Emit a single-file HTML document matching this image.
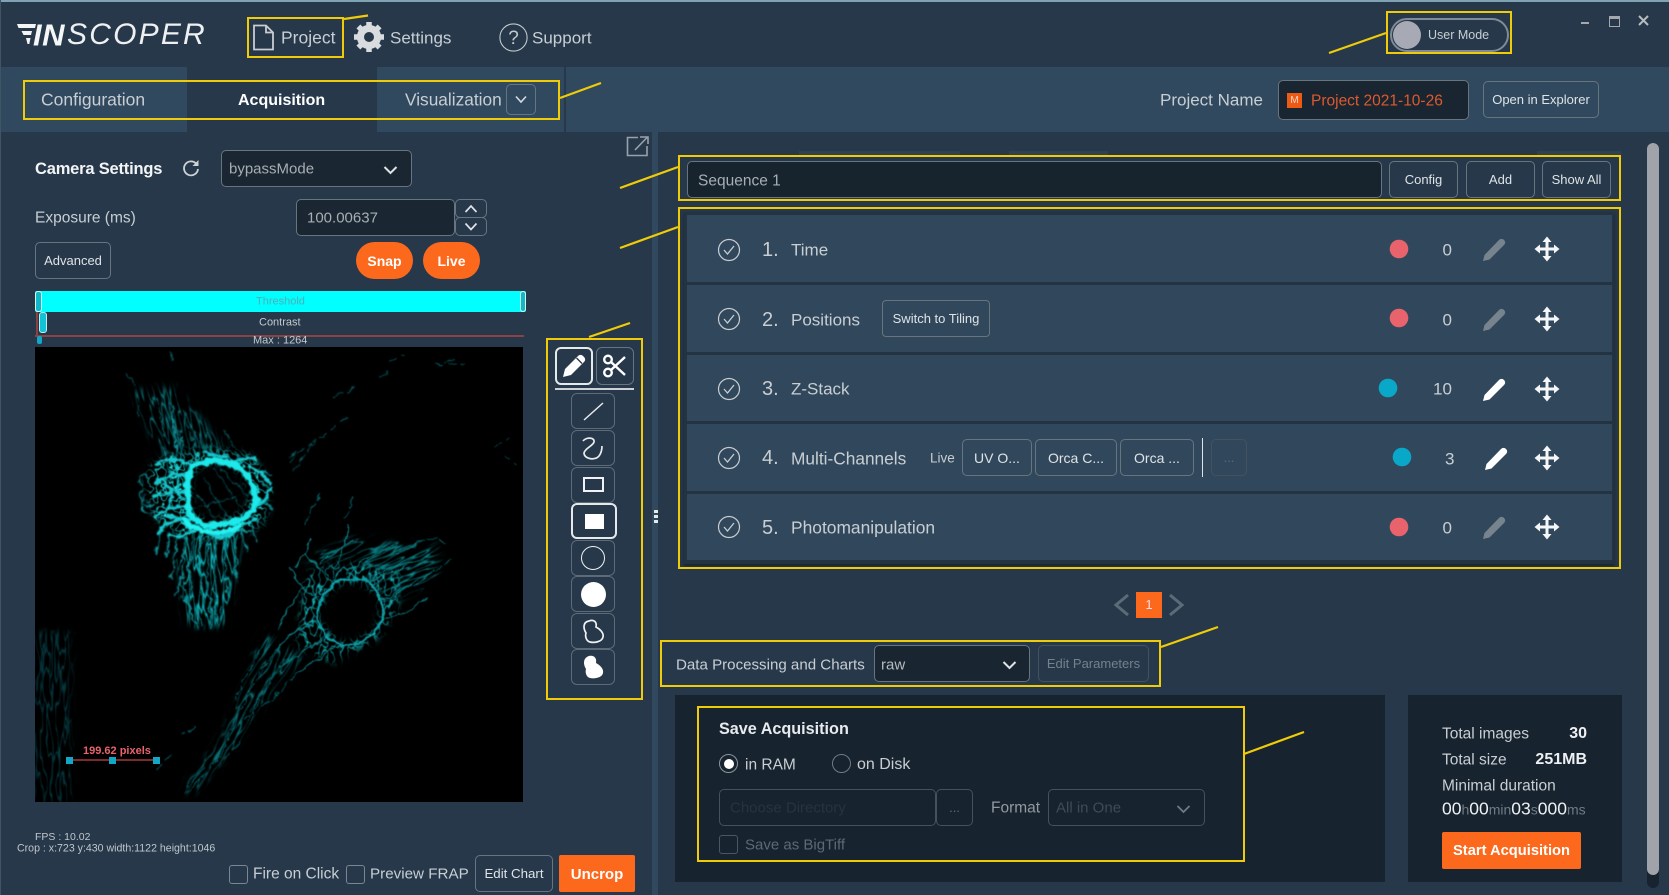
<!DOCTYPE html>
<html><head><meta charset="utf-8">
<style>
html,body{margin:0;padding:0;background:#26384a;}
#p{position:relative;width:1669px;height:895px;overflow:hidden;background:#26384a;font-family:"Liberation Sans",sans-serif;color:#c8ced3;}
#p>*{position:absolute;}
.t{white-space:nowrap;transform:translateY(-50%);line-height:1;}
.b{box-sizing:border-box;border:1.5px solid #67757f;border-radius:5px;display:flex;align-items:center;justify-content:center;color:#dfe3e6;font-size:13px;white-space:nowrap;}
.d{background:#192530;}
.o{background:#fd691c;color:#fff;font-weight:bold;border:none;}
.dis{border-color:#44525e;color:#5d6973;}
.row{left:687px;width:925px;background:#31485c;}
.y{box-sizing:border-box;border:2.5px solid #f0cc08;}
.tool{left:571px;width:44px;height:36px;box-sizing:border-box;border:1.5px solid #5d6b78;border-radius:6px;}
svg{overflow:visible;}
</style></head><body><div id="p">
<!-- bars -->
<div style="left:0;top:0;width:1669px;height:67px;background:#26384a"></div>
<div style="left:0;top:0;width:1669px;height:1.5px;background:#7fa3b3"></div>
<div style="left:0;top:67px;width:1669px;height:65px;background:#30495e"></div>
<div style="left:187px;top:67px;width:190px;height:65px;background:#26384a"></div>
<div style="left:564px;top:67px;width:1.5px;height:65px;background:#26384a"></div>
<div style="left:652px;top:132px;width:6px;height:763px;background:#30495e"></div>
<div style="left:0;top:0;width:1px;height:895px;background:#3f5566"></div>
<div style="left:799px;top:151px;width:161px;height:4px;background:#2e4253"></div>
<div style="left:1009px;top:151px;width:99px;height:4px;background:#2e4253"></div>
<div style="left:1537px;top:151px;width:84px;height:4px;background:#2e4253"></div>

<!-- logo -->
<svg style="left:17px;top:22px" width="20" height="24" viewBox="0 0 20 24"><path d="M0 2H19L18 6H1.5ZM4.5 9H15L14 13H6.5ZM9 16H13.5L12.3 22H10.5Z" fill="#f2f4f6"/></svg>
<div class="t" style="left:33px;top:35px;font-size:31px;font-weight:bold;font-style:italic;color:#f5f6f7;letter-spacing:.5px">IN</div>
<div class="t" style="left:67px;top:35px;font-size:30px;font-style:italic;color:#eef0f2;letter-spacing:2.2px">SCOPER</div>

<!-- top nav -->
<svg style="left:253px;top:24px" width="21" height="27" viewBox="0 0 21 27"><path d="M1 1.5H13L20 8.5V25.5H1ZM13 1.5V8.5H20" fill="none" stroke="#c9cdd1" stroke-width="1.8"/></svg>
<div class="t" style="left:281px;top:38px;font-size:17.5px">Project</div>
<svg style="left:354px;top:22px" width="30" height="30" viewBox="-15 -15 30 30"><circle r="8.6" fill="none" stroke="#d9dcdf" stroke-width="7"/><g stroke="#d9dcdf" stroke-width="5.5"><path d="M0-15V15M-15 0H15M-10.6-10.6L10.6 10.6M-10.6 10.6L10.6-10.6"/></g><circle r="5" fill="#26384a"/></svg>
<div class="t" style="left:390px;top:38px;font-size:17px">Settings</div>
<svg style="left:499px;top:23px" width="29" height="29" viewBox="0 0 29 29"><circle cx="14.5" cy="14.5" r="13.6" fill="none" stroke="#c4c9cd" stroke-width="1.1"/><text x="14.5" y="21" text-anchor="middle" font-size="19" fill="#c4c9cd" font-family="Liberation Sans">?</text></svg>
<div class="t" style="left:532px;top:38px;font-size:17px">Support</div>

<!-- tabs -->
<div class="t" style="left:41px;top:100px;font-size:17.5px">Configuration</div>
<div class="t" style="left:238px;top:101px;font-size:16px;font-weight:bold;color:#fff">Acquisition</div>
<div class="t" style="left:405px;top:100px;font-size:17.3px">Visualization</div>
<div class="b" style="left:506px;top:84px;width:30px;height:31px"><svg width="14" height="9" viewBox="0 0 14 9"><path d="M2 1.5L7 7L12 1.5" fill="none" stroke="#d5d9dc" stroke-width="1.6"/></svg></div>

<!-- user mode -->
<div style="left:1390px;top:18px;width:119px;height:34px;box-sizing:border-box;border:2px solid #7f8b95;border-radius:17px"></div>
<div style="left:1392.500px;top:21px;width:28px;height:28px;border-radius:50%;background:#a7aab4"></div>
<div class="t" style="left:1428px;top:35px;font-size:12.5px;color:#c9ced2">User Mode</div>
<div style="left:1581px;top:22px;width:8px;height:2px;background:#a3a9ae"></div>
<div style="left:1609px;top:16px;width:9px;height:7px;border:1.5px solid #a3a9ae;border-top-width:3px"></div>
<svg style="left:1638px;top:15px" width="11" height="11"><path d="M1 1L10 10M10 1L1 10" stroke="#b7bcc0" stroke-width="2"/></svg>

<!-- project name -->
<div class="t" style="left:1160px;top:100px;font-size:17px">Project Name</div>
<div class="b d" style="left:1278px;top:80px;width:191px;height:40px"></div>
<div style="left:1287px;top:93px;width:15px;height:15px;background:#ee5a14;color:#f8d8c8;font-size:10px;line-height:15px;text-align:center">M</div>
<div class="t" style="left:1311px;top:101px;font-size:15.500px;color:#dd5a2e">Project 2021-10-26</div>
<div class="b" style="left:1483px;top:81px;width:116px;height:37px;font-size:13px">Open in Explorer</div>

<!-- camera settings -->
<svg style="left:626px;top:136px" width="23" height="21" viewBox="0 0 23 21"><path d="M12 1.500H1.500V19.500H21V10M9 14L21.500 1M14 1H22V8" fill="none" stroke="#98a2ab" stroke-width="1.600"/></svg>
<div class="t" style="left:35px;top:169px;font-size:16.500px;font-weight:bold;color:#f2f4f5;letter-spacing:-.2px">Camera Settings</div>
<svg style="left:182px;top:159px" width="18" height="18" viewBox="0 0 18 18"><path d="M14.500 5A7 7 0 1 0 16 10" fill="none" stroke="#cdd2d6" stroke-width="1.800"/><path d="M16.500 1V7H10.500Z" fill="#cdd2d6"/></svg>
<div class="b d" style="left:221px;top:150px;width:191px;height:37px;background:#1a2732"></div>
<div class="t" style="left:229px;top:169px;font-size:15px;color:#a7aeb4">bypassMode</div>
<svg style="left:383px;top:165px" width="15" height="10"><path d="M1.500 2L7.500 8L13.500 2" fill="none" stroke="#dfe3e6" stroke-width="2"/></svg>
<div class="t" style="left:35px;top:218px;font-size:15.500px">Exposure (ms)</div>
<div class="b d" style="left:296px;top:199px;width:159px;height:37px;background:#1a2732"></div>
<div class="t" style="left:307px;top:218px;font-size:15px;color:#a7aeb4">100.00637</div>
<div class="b" style="left:455px;top:199px;width:32px;height:19px"><svg width="14" height="9"><path d="M1.500 8L7 2L12.500 8" fill="none" stroke="#dfe3e6" stroke-width="1.700"/></svg></div>
<div class="b" style="left:455px;top:217px;width:32px;height:19px"><svg width="14" height="9"><path d="M1.500 1.500L7 7.500L12.500 1.500" fill="none" stroke="#dfe3e6" stroke-width="1.700"/></svg></div>
<div class="b" style="left:35px;top:242px;width:76px;height:37px">Advanced</div>
<div class="b o" style="left:356px;top:242px;width:57px;height:37px;border-radius:19px;font-size:14px">Snap</div>
<div class="b o" style="left:423px;top:242px;width:57px;height:37px;border-radius:19px;font-size:14px">Live</div>

<!-- sliders -->
<div style="left:35px;top:291px;width:491px;height:21px;background:#00ffff;border-radius:2px"></div>
<div style="left:35px;top:291px;width:7px;height:21px;background:#13b7cc;border:1px solid #cfe;box-sizing:border-box;border-radius:3px"></div>
<div style="left:520px;top:291px;width:6px;height:21px;background:#13b7cc;border:1px solid #cfe;box-sizing:border-box;border-radius:3px"></div>
<div class="t" style="left:256px;top:302px;font-size:11px;color:#50aeb6">Threshold</div>
<div class="t" style="left:259px;top:323px;font-size:11px;color:#c4cacf">Contrast</div>
<div style="left:35px;top:335px;width:489px;height:1.500px;background:#8a4342"></div>
<div style="left:36px;top:312px;width:1.500px;height:23px;background:#8a4342"></div>
<div style="left:38.500px;top:312px;width:8px;height:21px;background:#12c3d8;border:1px solid #bdeff3;box-sizing:border-box;border-radius:3px"></div>
<div style="left:37px;top:336px;width:5px;height:8px;background:#12a7c7;border-radius:2px"></div>
<div class="t" style="left:253px;top:341px;font-size:11px;color:#c4cacf">Max : 1264</div>

<!-- microscopy image -->
<svg style="left:35px;top:347px;background:#000;overflow:hidden" width="488" height="455" viewBox="0 0 488 455">
<defs>
<filter id="mesh" filterUnits="userSpaceOnUse" x="0" y="0" width="488" height="455" color-interpolation-filters="sRGB">
<feGaussianBlur in="SourceGraphic" stdDeviation="4" result="s"/>
<feTurbulence type="fractalNoise" baseFrequency=".13" numOctaves="2" seed="3" result="n"/>
<feColorMatrix in="n" type="matrix" values="0 0 0 0 0  0 0 0 0 0  0 0 0 0 0  1 0 0 0 0"/>
<feComponentTransfer><feFuncA type="table" tableValues="0 0 0 0 0 0 0 0 0 .12 1 .12 0 0 0 0 0 0 0 0 0"/></feComponentTransfer>
<feGaussianBlur stdDeviation=".45" result="r"/>
<feComposite in="s" in2="r" operator="in"/>
</filter>
<filter id="mesh2" filterUnits="userSpaceOnUse" x="0" y="0" width="488" height="455" color-interpolation-filters="sRGB">
<feGaussianBlur in="SourceGraphic" stdDeviation="3.500" result="s"/>
<feTurbulence type="fractalNoise" baseFrequency=".14 .09" numOctaves="2" seed="11" result="n"/>
<feColorMatrix in="n" type="matrix" values="0 0 0 0 0  0 0 0 0 0  0 0 0 0 0  0 1 0 0 0"/>
<feComponentTransfer><feFuncA type="table" tableValues="0 0 0 0 0 0 0 0 0 .1 1 .1 0 0 0 0 0 0 0 0 0"/></feComponentTransfer>
<feGaussianBlur stdDeviation=".4" result="r"/>
<feComposite in="s" in2="r" operator="in"/>
</filter>
<filter id="st" filterUnits="userSpaceOnUse" x="-300" y="-300" width="1100" height="1100" color-interpolation-filters="sRGB">
<feGaussianBlur in="SourceGraphic" stdDeviation="4" result="s"/>
<feTurbulence type="fractalNoise" baseFrequency=".17 .028" numOctaves="2" seed="21" result="n"/>
<feColorMatrix in="n" type="matrix" values="0 0 0 0 0  0 0 0 0 0  0 0 0 0 0  1 0 0 0 0"/>
<feComponentTransfer><feFuncA type="table" tableValues="0 0 0 0 0 0 0 0 0 .1 1 .1 0 0 0 0 0 0 0 0 0"/></feComponentTransfer>
<feGaussianBlur stdDeviation=".4" result="r"/>
<feComposite in="s" in2="r" operator="in"/>
</filter>
<filter id="w1" x="-10%" y="-10%" width="120%" height="120%"><feTurbulence type="fractalNoise" baseFrequency=".12" numOctaves="3" seed="4"/><feDisplacementMap in="SourceGraphic" scale="8" xChannelSelector="R" yChannelSelector="G"/><feGaussianBlur stdDeviation=".8"/></filter>
<filter id="w2" x="-10%" y="-10%" width="120%" height="120%"><feTurbulence type="fractalNoise" baseFrequency=".1" numOctaves="3" seed="9"/><feDisplacementMap in="SourceGraphic" scale="7" xChannelSelector="G" yChannelSelector="R"/><feGaussianBlur stdDeviation=".55"/></filter>
</defs>
<!-- dense mesh, masked by cell shapes -->
<g filter="url(#mesh)">
<path fill-rule="evenodd" d="M112 125C122 104 170 98 208 106C232 116 238 150 230 170C220 190 190 194 160 190C128 190 106 160 112 125ZM160 122C170 114 196 114 206 126C216 140 218 152 212 160C204 170 188 174 172 172C160 170 154 160 156 148C155 138 155 130 160 122Z" fill="#22ffff"/>
</g>
<g filter="url(#st)">
<path d="M140 186H206L198 240L190 278H152L146 240Z" fill="#0cc4ca"/>
</g>
<g transform="rotate(-15 150 80)" filter="url(#st)">
<path transform="rotate(15 150 80)" d="M96 44L140 40L192 104L126 108Z" fill="#0a7d84"/>
</g>
<g filter="url(#mesh2)">
<path fill-rule="evenodd" d="M262 300L270 226L310 214L366 226L362 262L344 290L300 316ZM286 266C286 250 300 236 318 236C336 236 346 252 344 270C340 284 328 292 312 294C296 292 287 282 286 266Z" fill="#13c2c8"/>
</g>
<g transform="rotate(65 320 230)" filter="url(#st)">
<path transform="rotate(-65 320 230)" d="M268 214L315 192L403 199L403 231L350 258L330 222Z" fill="#0a8c92"/>
</g>
<g transform="rotate(30 240 320)" filter="url(#st)">
<path transform="rotate(-30 240 320)" d="M228 284L270 312L239 340L200 400L160 445L145 445L190 385L218 312Z" fill="#0a7d83"/>
</g>
<g filter="url(#st)">
<path d="M0 285H36V455H0Z" fill="#063f47"/>
</g>
<g filter="url(#w1)" fill="none" stroke-linecap="round">
<g stroke="#0b5f66" stroke-width="1.100" stroke-dasharray="9 3">
<path d="M136 6L138 16M92 26L100 38M104 48L102 72M122 50L130 88M134 56L146 100M148 62L160 98M158 84L172 108M172 86L188 112M190 84L198 100"/>
<path d="M258 124L280 92M300 50L320 40M345 30L352 26M410 16L420 12M255 110L262 104"/>
</g>
<g stroke="#0d9299" stroke-width="1.300">
<path d="M138 60L142 112M128 100L136 134M146 90L150 118M158 100L164 116M175 98L180 114M200 106L206 118M220 122L236 128M224 134L240 145M222 150L236 160M214 168L230 180"/>
<path d="M108 142C100 150 106 160 120 158M112 130C104 124 100 134 108 140M120 165C108 170 104 160 108 150"/>
<path d="M134 186L132 210M142 190L136 232M150 190L146 236L156 262M158 186L154 228L158 250M166 186L164 220L170 262M174 186L172 232L176 272M182 186L178 240L182 276M190 186L190 230L194 250M198 182L202 208L200 230M206 178L212 206M214 172L222 196M128 180L120 206"/>
<path d="M150 250L162 282M160 258L168 278M178 260L176 280M188 258L184 272M148 232L140 248"/>
</g>
<g stroke="#13c8ce" stroke-width="3">
<path d="M155 118C145 112 130 108 122 118M150 130C140 124 128 128 122 136M152 146C140 142 128 146 118 150M150 160C138 158 126 162 120 172M154 172C142 172 128 176 124 186M166 182C154 186 146 190 134 188"/>
<path d="M172 186C180 194 192 190 204 182M196 178C206 182 216 176 222 170M222 158C230 154 234 148 236 140M216 120C226 122 230 130 234 136M200 116C206 112 212 110 220 112M170 106C176 110 186 108 194 110"/>
<path d="M128 134C136 140 140 150 134 160M140 118C146 126 142 140 146 150M132 168C140 168 150 174 156 182"/>
</g>
<path d="M157 120C170 112 195 110 208 124C218 136 224 150 219 160C212 172 190 180 172 178C160 176 150 166 153 150C152 138 152 128 157 120Z" stroke="#1be9ea" stroke-width="6" stroke-dasharray="18 2 11 3"/>
<path d="M150 172C160 186 186 192 206 178" stroke="#22f2f2" stroke-width="5"/>
<g stroke="#0a646b" stroke-width=".9">
<path d="M168 130L192 168M178 122L206 160M162 146L180 172M186 120L212 150M165 160L200 150"/>
</g>
</g>
<g filter="url(#w2)" fill="none" stroke-linecap="round">
<path d="M283 266C283 248 298 232 318 232C338 232 350 250 348 270C344 286 330 296 312 298C294 296 284 284 283 266Z" stroke="#0f9fa6" stroke-width="2.200"/>
<g stroke="#0a7a80" stroke-width="1.200">
<path d="M283 250C270 244 262 236 256 222M296 236C290 224 276 216 270 206M312 230C320 216 344 204 362 196M332 236C350 226 372 218 396 208M346 254C362 246 380 236 398 224M350 272C362 268 380 262 392 250M284 272C268 280 252 290 240 304M290 288C276 300 262 312 244 318M304 296C292 304 280 316 262 326M270 240C258 252 250 266 242 282"/>
<path d="M298 232C300 214 310 200 314 178M286 216C296 206 310 196 318 194M356 208C366 204 378 200 386 196M260 220C268 210 272 200 276 192"/>
</g>
<g stroke="#075a60" stroke-width="1" stroke-dasharray="10 3">
<path d="M240 304C226 322 216 340 206 362M250 312C232 336 222 356 210 372M226 304C216 318 210 334 200 352M206 362C198 376 194 390 188 404M262 326C250 340 240 352 228 358M236 330C232 340 222 356 214 378M270 178C274 170 278 160 284 148M380 200C390 192 402 188 410 196M400 226L416 212M310 172L318 150"/>
</g>
<g stroke="#064f55" stroke-width="1" stroke-dasharray="8 5">
<path d="M188 404C176 420 164 436 150 446M170 420L152 440M136 408L120 424M160 380L146 386M204 396L190 412M275 100C290 90 300 78 312 70M254 116L276 96M355 14L370 8M400 18L430 16M470 108L482 118M460 100L474 92"/>
</g>
</g>
<path d="M35 413H122" stroke="#a8383c" stroke-width="1.600"/>
<rect x="31" y="410" width="7" height="7" fill="#12a7c7"/><rect x="74" y="410" width="7" height="7" fill="#12a7c7"/><rect x="118" y="410" width="7" height="7" fill="#12a7c7"/>
<text x="48" y="407" font-size="11" font-weight="bold" font-family="Liberation Sans" fill="#e8636b">199.62 pixels</text>
</svg>

<!-- tools -->
<div class="b" style="left:555px;top:347px;width:38px;height:38px;border:2px solid #e6e9eb;border-radius:6px"></div>
<svg style="left:561px;top:353px" width="26" height="26" viewBox="0 0 26 26"><path d="M2 24L4 16L17 3C18.500 1.500 20.500 1.500 22 3L23 4C24.500 5.500 24.500 7.500 23 9L10 22Z" fill="#fff"/><path d="M15.500 5L21 10.500" stroke="#26384a" stroke-width="1.300"/></svg>
<div class="b" style="left:596px;top:347px;width:38px;height:38px;border-radius:6px"></div>
<svg style="left:603px;top:354px" width="24" height="24" viewBox="0 0 24 24" fill="none" stroke="#fff" stroke-width="2.400"><circle cx="5" cy="18.500" r="3.800"/><circle cx="5" cy="5.500" r="3.800"/><path d="M8 8L22 21M8 16L22 3"/></svg>
<div style="left:555px;top:388px;width:79px;height:1.800px;background:#ccd1d5"></div>

<div class="tool" style="top:393px"></div>
<svg style="left:583px;top:402px" width="21" height="19"><path d="M1 18L20 1" stroke="#e8eaec" stroke-width="1.500"/></svg>
<div class="tool" style="top:430px"></div>
<svg style="left:582px;top:437px" width="22" height="24" viewBox="0 0 22 24"><path d="M1 4C4 0 13 0 12 5C11 9 3 11 2 16C2 22 13 24 17 19C20 15 20 11 20 9" fill="none" stroke="#e8eaec" stroke-width="1.700"/></svg>
<div class="tool" style="top:467px"></div>
<div style="left:583px;top:477px;width:21px;height:15px;box-sizing:border-box;border:2px solid #f0f2f3"></div>
<div class="tool" style="top:503px;width:46px;border:2px solid #e6e9eb"></div>
<div style="left:585px;top:514px;width:19px;height:15px;background:#fff"></div>
<div class="tool" style="top:540px"></div>
<div style="left:581px;top:546px;width:24px;height:24px;box-sizing:border-box;border:1.800px solid #f0f2f3;border-radius:50%"></div>
<div class="tool" style="top:576px"></div>
<div style="left:581px;top:582px;width:25px;height:25px;background:#fff;border-radius:50%"></div>
<div class="tool" style="top:613px"></div>
<svg style="left:582px;top:619px" width="24" height="25" viewBox="0 0 24 25"><path d="M7 2C12 0 15 3 14 8C18 10 22 14 21 18C20 23 12 24 8 23C4 22 3 17 4 14C1 9 1 3 7 2Z" fill="none" stroke="#f0f2f3" stroke-width="1.700"/></svg>
<div class="tool" style="top:649px"></div>
<svg style="left:582px;top:655px" width="24" height="25" viewBox="0 0 24 25"><path d="M7 1C12 0 15 3 14 8C18 10 22 14 21 18C20 23 12 24 8 23C4 22 3 17 4 14C1 9 1 3 7 1Z" fill="#fff"/></svg>
<div style="left:654px;top:510px;width:4px;height:3px;background:#e6e9eb"></div>
<div style="left:654px;top:515px;width:4px;height:3px;background:#e6e9eb"></div>
<div style="left:654px;top:520px;width:4px;height:3px;background:#e6e9eb"></div>

<!-- left footer -->
<div class="t" style="left:35px;top:837px;font-size:10.500px;color:#c0c6cb">FPS : 10.02</div>
<div class="t" style="left:17px;top:849px;font-size:10.600px;color:#c0c6cb">Crop : x:723 y:430 width:1122 height:1046</div>
<div style="left:229px;top:865px;width:19px;height:19px;box-sizing:border-box;border:1.500px solid #7a8791;border-radius:3px"></div>
<div class="t" style="left:253px;top:874px;font-size:15.500px">Fire on Click</div>
<div style="left:346px;top:865px;width:19px;height:19px;box-sizing:border-box;border:1.500px solid #7a8791;border-radius:3px"></div>
<div class="t" style="left:370px;top:874px;font-size:15.200px">Preview FRAP</div>
<div class="b" style="left:475px;top:855px;width:78px;height:37px;font-size:13.300px">Edit Chart</div>
<div class="b o" style="left:559px;top:855px;width:76px;height:37px;font-size:15px;border-radius:2px;padding-top:1px">Uncrop</div>

<!-- sequence -->
<div class="b d" style="left:687px;top:161px;width:695px;height:37px;background:#17232d"></div>
<div class="t" style="left:698px;top:181px;font-size:15.500px;color:#a7aeb4">Sequence 1</div>
<div class="b" style="left:1389px;top:161px;width:69px;height:37px">Config</div>
<div class="b" style="left:1466px;top:161px;width:69px;height:37px">Add</div>
<div class="b" style="left:1542px;top:161px;width:69px;height:37px">Show All</div>

<!-- steps -->
<div style="left:684px;top:212px;width:930px;height:352px;background:#233341;box-shadow:0 2px 3px #18242e"></div>
<div class="row" style="top:215px;height:67px"></div>
<div class="row" style="top:285px;height:67px"></div>
<div class="row" style="top:355px;height:66px"></div>
<div class="row" style="top:424px;height:67px"></div>
<div class="row" style="top:494px;height:66px"></div>

<svg style="left:0;top:0" width="1669" height="895" font-family="Liberation Sans">
<defs>
<g id="ck"><circle r="10.500" fill="none" stroke="#c8ced3" stroke-width="1.200"/><path d="M-5 0L-1.500 4L5-4" fill="none" stroke="#c8ced3" stroke-width="1.300"/></g>
<path id="pen" d="M-11 12L-9.500 6L5-9C6.500-10.500 8.500-10.500 10-9C11.500-7.500 11.500-5.500 10-4L-4.500 10.500Z"/>
<g id="mv" fill="#f5f6f7"><path d="M-1.500-8H1.500V-1.500H8V1.500H1.500V8H-1.500V1.500H-8V-1.500H-1.500Z"/><path d="M0-12.500L4.500-7H-4.500ZM0 12.500L4.500 7H-4.500ZM-12.500 0L-7 4.500V-4.500ZM12.500 0L7 4.500V-4.500Z"/></g>
</defs>
<use href="#ck" x="729" y="250"/><use href="#ck" x="729" y="319"/><use href="#ck" x="729" y="389"/><use href="#ck" x="729" y="458"/><use href="#ck" x="729" y="527"/>
<circle cx="1399" cy="249" r="9.300" fill="#e8636b"/><circle cx="1399" cy="318" r="9.300" fill="#e8636b"/><circle cx="1388" cy="388" r="9.300" fill="#0aa8c8"/><circle cx="1402" cy="457" r="9.300" fill="#0aa8c8"/><circle cx="1399" cy="527" r="9.300" fill="#e8636b"/>
<use href="#pen" x="1494" y="249" fill="#78848d"/><use href="#pen" x="1494" y="319" fill="#78848d"/><use href="#pen" x="1494" y="389" fill="#fff"/><use href="#pen" x="1496" y="458" fill="#fff"/><use href="#pen" x="1494" y="527" fill="#78848d"/>
<use href="#mv" x="1547" y="249"/><use href="#mv" x="1547" y="319"/><use href="#mv" x="1547" y="389"/><use href="#mv" x="1547" y="458"/><use href="#mv" x="1547" y="527"/>
</svg>

<div class="t" style="left:762px;top:250px;font-size:20px">1.</div><div class="t" style="left:791px;top:250px;font-size:17px">Time</div>
<div class="t" style="left:762px;top:320px;font-size:20px">2.</div><div class="t" style="left:791px;top:320px;font-size:17px">Positions</div>
<div class="t" style="left:762px;top:389px;font-size:20px">3.</div><div class="t" style="left:791px;top:389px;font-size:17px">Z-Stack</div>
<div class="t" style="left:762px;top:458px;font-size:20px">4.</div><div class="t" style="left:791px;top:459px;font-size:17.300px">Multi-Channels</div>
<div class="t" style="left:762px;top:528px;font-size:20px">5.</div><div class="t" style="left:791px;top:528px;font-size:17.400px">Photomanipulation</div>
<div class="t" style="left:1442.500px;top:250px;font-size:17px">0</div>
<div class="t" style="left:1442.500px;top:320px;font-size:17px">0</div>
<div class="t" style="left:1433px;top:389px;font-size:17px">10</div>
<div class="t" style="left:1445px;top:459px;font-size:17px">3</div>
<div class="t" style="left:1442.500px;top:528px;font-size:17px">0</div>
<div class="b" style="left:882px;top:300px;width:108px;height:37px;border-radius:4px">Switch to Tiling</div>
<div class="t" style="left:930px;top:458px;font-size:13.500px">Live</div>
<div class="b" style="left:962px;top:439px;width:70px;height:37px;font-size:14px">UV O...</div>
<div class="b" style="left:1035px;top:439px;width:82px;height:37px;font-size:14px">Orca C...</div>
<div class="b" style="left:1120px;top:439px;width:74px;height:37px;font-size:14px">Orca ...</div>
<div style="left:1201.500px;top:438px;width:1.500px;height:39px;background:#dfe3e6"></div>
<div class="b dis" style="left:1211px;top:439px;width:36px;height:37px">...</div>

<!-- pagination -->
<svg style="left:1112px;top:593px" width="19" height="24"><path d="M16 2L4 12L16 22" fill="none" stroke="#5c6b78" stroke-width="3"/></svg>
<div style="left:1136px;top:592px;width:26px;height:26px;background:#fd691c;color:#fde;font-size:13px;line-height:26px;text-align:center">1</div>
<svg style="left:1167px;top:593px" width="19" height="24"><path d="M3 2L15 12L3 22" fill="none" stroke="#5c6b78" stroke-width="3"/></svg>

<!-- data processing -->
<div class="t" style="left:676px;top:665px;font-size:15.100px">Data Processing and Charts</div>
<div class="b d" style="left:874px;top:645px;width:156px;height:37px"></div>
<div class="t" style="left:881px;top:665px;font-size:15px;color:#b5bbc0">raw</div>
<svg style="left:1002px;top:660px" width="15" height="10"><path d="M1.500 2L7.500 8L13.500 2" fill="none" stroke="#dfe3e6" stroke-width="2"/></svg>
<div class="b dis" style="left:1038px;top:645px;width:111px;height:37px;font-size:13px;color:#75818b">Edit Parameters</div>

<!-- save panel -->
<div style="left:675px;top:695px;width:710px;height:187px;background:#17232e"></div>
<div style="left:1408px;top:695px;width:214px;height:187px;background:#17232e"></div>
<div class="t" style="left:719px;top:729px;font-size:16.200px;font-weight:bold;color:#e8ebed">Save Acquisition</div>
<div style="left:719px;top:754px;width:19px;height:19px;box-sizing:border-box;border:1.500px solid #8b959d;border-radius:50%"></div>
<div style="left:723.500px;top:758.500px;width:10px;height:10px;background:#fff;border-radius:50%"></div>
<div class="t" style="left:745px;top:765px;font-size:15.500px">in RAM</div>
<div style="left:832px;top:754px;width:19px;height:19px;box-sizing:border-box;border:1.500px solid #6f7b85;border-radius:50%"></div>
<div class="t" style="left:857px;top:765px;font-size:16px">on Disk</div>
<div class="b dis" style="left:719px;top:789px;width:217px;height:37px;background:#17232e"></div>
<div class="t" style="left:730px;top:808px;font-size:15px;color:#27343f">Choose Directory</div>
<div class="b dis" style="left:936px;top:789px;width:37px;height:37px">...</div>
<div class="t" style="left:991px;top:808px;font-size:15.500px;color:#929aa1">Format</div>
<div class="b dis" style="left:1048px;top:789px;width:157px;height:37px"></div>
<div class="t" style="left:1056px;top:808px;font-size:15px;color:#3f4b55">All in One</div>
<svg style="left:1176px;top:804px" width="15" height="10"><path d="M1.500 2L7.500 8L13.500 2" fill="none" stroke="#6e7a84" stroke-width="1.800"/></svg>
<div style="left:719px;top:835px;width:19px;height:19px;box-sizing:border-box;border:1.500px solid #4a5762;border-radius:3px"></div>
<div class="t" style="left:745px;top:845px;font-size:15px;color:#5d6973">Save as BigTiff</div>

<div class="t" style="left:1442px;top:734px;font-size:15.500px">Total images</div>
<div class="t" style="right:82px;top:734px;font-size:16px;font-weight:bold;color:#eef0f2">30</div>
<div class="t" style="left:1442px;top:760px;font-size:15.500px">Total size</div>
<div class="t" style="right:82px;top:760px;font-size:16px;font-weight:bold;color:#eef0f2">251MB</div>
<div class="t" style="left:1442px;top:786px;font-size:15.500px">Minimal duration</div>
<div class="t" style="left:1442px;top:809px;font-size:17.500px;color:#eef0f2">00<span style="font-size:14px;color:#6f7b85">h</span>00<span style="font-size:14px;color:#6f7b85">min</span>03<span style="font-size:14px;color:#6f7b85">s</span>000<span style="font-size:14px;color:#6f7b85">ms</span></div>
<div class="b o" style="left:1442px;top:832px;width:139px;height:37px;font-size:14.700px;border-radius:2px;padding-top:1px">Start Acquisition</div>

<!-- scrollbar -->
<div style="left:1647px;top:143px;width:12px;height:745px;background:#17232e;border-radius:6px"></div>
<div style="left:1647px;top:143px;width:12px;height:732px;background:#a0a4aa;border-radius:6px"></div>

<!-- yellow annotation boxes -->
<div class="y" style="left:247px;top:17px;width:97px;height:41px"></div>
<div class="y" style="left:23px;top:80px;width:537px;height:40px"></div>
<div class="y" style="left:1386px;top:11px;width:126px;height:43px"></div>
<div class="y" style="left:678px;top:155px;width:943px;height:46px"></div>
<div class="y" style="left:678px;top:207px;width:943px;height:362px"></div>
<div class="y" style="left:546px;top:338px;width:97px;height:362px"></div>
<div class="y" style="left:660px;top:640px;width:501px;height:47px"></div>
<div class="y" style="left:697px;top:706px;width:548px;height:156px"></div>
<svg style="left:0;top:0" width="1669" height="895"><g stroke="#f0cc08" stroke-width="2.200"><path d="M344 19L368 15.500M560 98L601 83M620 188L678 167M620 248L678 227M589 337L630 323M1161 647L1218 627M1244 754L1304 732M1386 33L1329 53"/></g></svg>
</div></body></html>
